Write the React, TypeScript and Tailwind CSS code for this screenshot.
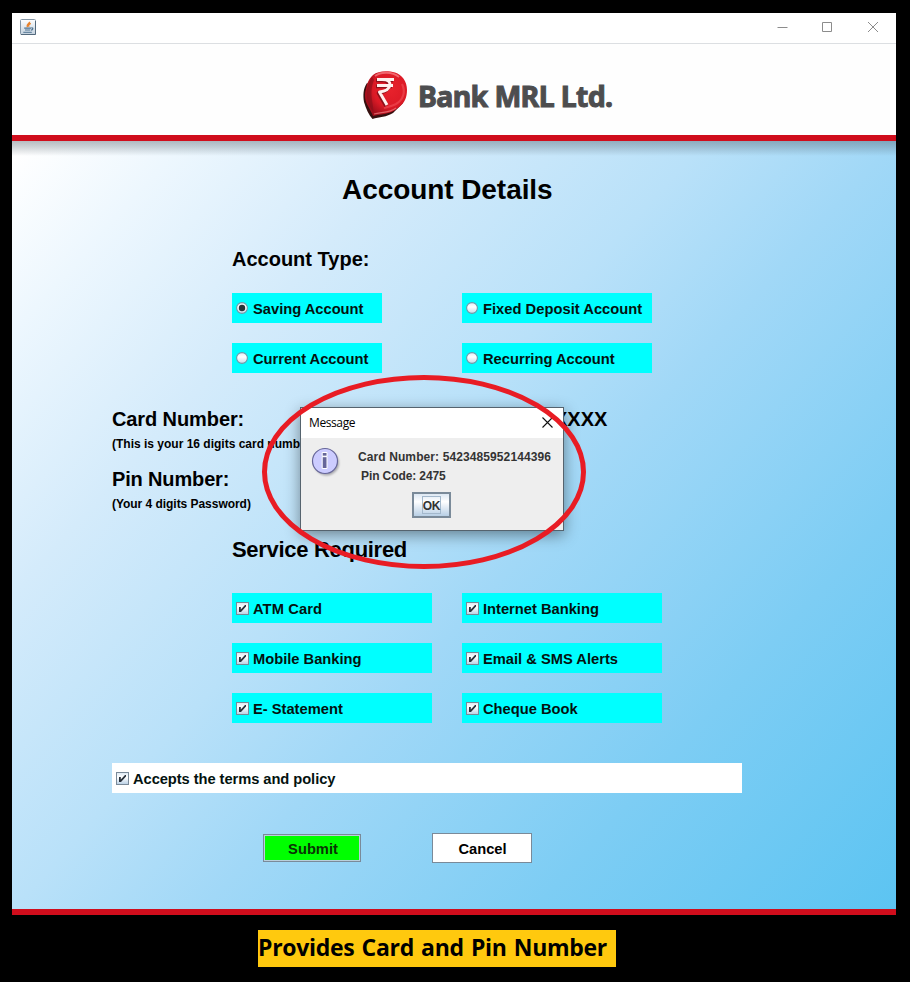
import React from "react";

function JavaIcon() {
  return (
    <svg width="16" height="16" viewBox="0 0 16 16" fill="none">
      <defs>
        <linearGradient id="jbg" x1="0" y1="0" x2="0" y2="1">
          <stop offset="0" stopColor="#ffffff" />
          <stop offset="1" stopColor="#c3d1de" />
        </linearGradient>
      </defs>
      <rect x="0.5" y="0.5" width="15" height="15" rx="1" fill="url(#jbg)" stroke="#8496a6" />
      <path d="M1 15.5H15.5V2" stroke="#53697c" />
      <path d="M9.5 2.7C10 4.6 6 5 7.3 8.3M10.8 4.3C8.3 5.4 8.3 6.3 9 7.7" stroke="#e8802a" strokeWidth="1.4" />
      <path d="M4.2 9.2H11M5 11H10.3M11.3 8.8C13.6 8.6 13 11 11 11.2" stroke="#4f7391" strokeWidth="1.2" />
      <path d="M3.3 13.3H11.8" stroke="#4f7391" />
    </svg>
  );
}

function RupeeLogo() {
  return (
    <svg width="46" height="50" viewBox="0 0 46 50" fill="none">
      <defs>
        <radialGradient id="ball" cx="0.6" cy="0.4" r="0.62">
          <stop offset="0" stopColor="#e8222c" />
          <stop offset="0.65" stopColor="#dc1a26" />
          <stop offset="1" stopColor="#a30f1c" />
        </radialGradient>
      </defs>
      <path d="M4 13C0 19 0 25 1 32C3 39 6 45 9.500 49C16 47 24 47 30 43L40 33Z" fill="#35100f" />
      <path d="M10 5C5 10 4 14 3 19C1 25 2 31 5 36C7 40 9 43 10 46C19 44 28 44 35 38C42 33 44 27 44 20C44 11 39 5 32 2.500C25 .3 15 .5 10 5Z" fill="url(#ball)" />
      <path d="M9 7C3 16 2 26 6 35C9 40 10 42 10 45C12 35 5 25 11 10Z" fill="#86101a" opacity=".6" />
      <path d="M12 6C18 1.500 29 1.500 36 7" stroke="#f78085" strokeWidth="1.800" opacity=".75" />
      <path d="M39 14C43 22 40 30 33 34C29 36 25 37 21 38" stroke="#f3555c" strokeWidth="2.200" opacity=".55" />
      <path d="M11 44C18 42 27 43 33 38" stroke="#f48085" strokeWidth="1.200" opacity=".7" />
      <g strokeLinejoin="round">
        <path d="M14 9.500H31M14 15.500H30M19 9.500C26 9.500 27 12 27 15C26 20 21 21.500 16.500 22L24 35" stroke="#8f101a" strokeWidth="3.600" transform="translate(-1 1)" />
        <path d="M14 9.500H31M14 15.500H30M19 9.500C26 9.500 27 12 27 15C26 20 21 21.500 16.500 22L24 35" stroke="#fff1ee" strokeWidth="3" />
      </g>
    </svg>
  );
}

function InfoIcon() {
  return (
    <svg width="32" height="32" viewBox="0 0 32 32">
      <defs>
        <filter id="soft" x="-20%" y="-20%" width="140%" height="140%">
          <feGaussianBlur stdDeviation="1.200" />
        </filter>
      </defs>
      <circle cx="15.500" cy="16" r="12.500" fill="#77777f" opacity=".6" filter="url(#soft)" />
      <circle cx="14" cy="14" r="12.500" fill="#ccccff" stroke="#666699" strokeWidth="1.200" />
      <path d="M11.200 5.500H16V9.200H11.200ZM11.200 9.700H16V21.500H11.200Z" fill="#666699" stroke="#fff" strokeWidth="1" />
    </svg>
  );
}

function Radio({ checked }: { checked?: boolean }) {
  return (
    <svg width="12" height="12" viewBox="0 0 12 12" className="block shrink-0">
      <defs>
        <linearGradient id="rg" x1="0" y1="0" x2="0" y2="1">
          <stop offset="0" stopColor="#e3edf6" />
          <stop offset=".4" stopColor="#ffffff" />
          <stop offset="1" stopColor="#c5dbea" />
        </linearGradient>
      </defs>
      <circle cx="6" cy="6" r="5.400" fill="url(#rg)" stroke="#7097a8" strokeWidth="1.100" />
      {checked && <circle cx="6" cy="6" r="3.200" fill="#26343a" />}
    </svg>
  );
}

function Check() {
  return (
    <svg width="13" height="13" viewBox="0 0 13 13" className="block shrink-0">
      <defs>
        <linearGradient id="cg" x1="0" y1="0" x2="0" y2="1">
          <stop offset="0" stopColor="#dce8f3" />
          <stop offset=".4" stopColor="#ffffff" />
          <stop offset="1" stopColor="#b8cfe5" />
        </linearGradient>
      </defs>
      <rect x=".5" y=".5" width="12" height="12" fill="url(#cg)" stroke="#7a8a99" />
      <path d="M3 5H4.800V7.500L9 3H10V4.500L5 10H3Z" fill="#28303a" />
    </svg>
  );
}

type OptProps = { label: string; radio?: boolean; checked?: boolean; box: string; text?: string };
function Option({ label, radio, checked, box, text = "" }: OptProps) {
  return (
    <label className={`flex h-[30px] items-center pl-1 ${box}`}>
      {radio ? <Radio checked={checked} /> : <Check />}
      <span className={`${radio ? "ml-[5px]" : "ml-1"} mt-0.5 whitespace-nowrap text-[14.7px] leading-[16px] font-bold text-[#04120f] ${text}`}>{label}</span>
    </label>
  );
}

function MessageDialog() {
  return (
    <div className="absolute left-[288px] top-[394px] flex h-[124px] w-[264px] flex-col border border-[#55636e] bg-[#eeeeee] shadow-[0_4px_14px_rgba(0,0,0,0.42)]">
      <div className="flex h-[30px] shrink-0 items-center justify-between bg-white pl-2 pr-[10px]">
        <span className="font-['Open_Sans','Noto_Sans',sans-serif] text-[12px] tracking-[-0.4px]">Message</span>
        <svg width="11" height="11" viewBox="0 0 11 11" className="mb-0.5"><path d="M.5.5L10.500 10.500M10.500.5L.5 10.500" stroke="#111" strokeWidth="1.100" /></svg>
      </div>
      <div className="flex h-[54px] shrink-0 pl-[10px] pt-[9px]">
        <InfoIcon />
        <div className="ml-[15px] mt-px whitespace-pre text-[12px] leading-[19px] font-bold text-[#333333]">
          <div className="tracking-[0.1px]">Card Number: 5423485952144396</div>
          <div className="pl-[3px] tracking-[-0.1px]">Pin Code: 2475</div>
        </div>
      </div>
      <button className="ml-[111px] flex h-[26px] w-[39px] shrink-0 items-center justify-center border-2 border-[#7a8a99] bg-linear-to-b from-[#dde8f3] via-white via-35% to-[#b8cfe5]">
        <span className="flex h-[18px] w-[19px] items-center justify-center border border-[#a3b8cc] pt-px text-[12px] font-bold tracking-[-0.3px] text-[#333333]">OK</span>
      </button>
    </div>
  );
}

export default function App() {
  return (
    <div className="flex h-[982px] w-[910px] flex-col overflow-hidden bg-black pl-3 pt-[13px] font-['Liberation_Sans',Arial,sans-serif] text-black">
      <main className="relative flex h-[902px] w-[884px] shrink-0 flex-col bg-white">
        <div className="flex h-[31px] shrink-0 items-center justify-between border-b border-[#dcdfe2] pl-2 pr-[17px]">
          <div className="pb-0.5"><JavaIcon /></div>
          <svg width="102" height="12" viewBox="0 0 102 12" fill="none" stroke="#8c8c8c" className="mb-0.5">
            <path d="M.5 6.500H10.500M45.500 1.500H54.500V10.500H45.500ZM91 1L101 11M101 1L91 11" />
          </svg>
        </div>
        <header className="flex h-[91px] shrink-0 bg-[#fefefe] pl-[351px] pt-[26px]">
          <RupeeLogo />
          <h2 className="ml-[9px] mt-[4px] whitespace-nowrap font-['Noto_Sans',sans-serif] text-[28.5px] leading-[44px] font-bold tracking-[-0.65px] text-[#4d4d4f] [-webkit-text-stroke:1px_#4d4d4f] [paint-order:stroke] [stroke-linejoin:round]">Bank MRL Ltd.</h2>
        </header>
        <div className="h-1.5 shrink-0 bg-[#d00d1c]" />
        <section className="h-[768px] shrink-0 bg-[linear-gradient(132deg,#ffffff_1%,#edf7fe_11%,#d4ebfb_26%,#b9e1f9_44%,#a1d8f7_56%,#7dcdf4_77%,#5cc4f2_100%)]">
          <div className="h-full bg-[linear-gradient(to_bottom,rgba(75,90,100,0.4)_0px,rgba(75,90,100,0.26)_6px,transparent_15px)] pl-[100px] pt-[31px]">
            <h1 className="pl-[230px] text-[28px] leading-[36px] font-bold tracking-[-0.07px]">Account Details</h1>
            <h3 className="mt-[35px] pl-[120px] text-[20px] leading-[32px] font-bold">Account Type:</h3>
            <div className="mt-[18px] grid grid-cols-[230px_200px] gap-y-5 pl-[120px]">
              <Option radio checked label="Saving Account" box="w-[150px] bg-[#00ffff]" />
              <Option radio label="Fixed Deposit Account" box="w-[190px] bg-[#00ffff]" text="tracking-[0.03px]" />
              <Option radio label="Current Account" box="w-[150px] bg-[#00ffff]" />
              <Option radio label="Recurring Account" box="w-[190px] bg-[#00ffff]" />
            </div>
            <div className="mt-[30px] flex text-[20px] leading-[32px] font-bold">
              <span className="w-[442px] tracking-[-0.1px]">Card Number:</span>
              <span>XXXX</span>
            </div>
            <p className="text-[12px] leading-[18px] font-bold">(This is your 16 digits card number)</p>
            <h3 className="mt-[10px] text-[20px] leading-[32px] font-bold tracking-[-0.15px]">Pin Number:</h3>
            <p className="text-[12px] leading-[18px] font-bold tracking-[-0.04px]">(Your 4 digits Password)</p>
            <h3 className="mt-[20px] pl-[120px] text-[22px] leading-[34px] font-bold tracking-[-0.3px]">Service Required</h3>
            <div className="mt-[26px] grid grid-cols-[200px_200px] gap-x-[30px] gap-y-5 pl-[120px]">
              <Option label="ATM Card" box="bg-[#00ffff]" text="tracking-[0.1px]" />
              <Option label="Internet Banking" box="bg-[#00ffff]" />
              <Option label="Mobile Banking" box="bg-[#00ffff]" />
              <Option label="Email & SMS Alerts" box="bg-[#00ffff]" />
              <Option label="E- Statement" box="bg-[#00ffff]" />
              <Option label="Cheque Book" box="bg-[#00ffff]" />
            </div>
            <Option label="Accepts the terms and policy" box="mt-[40px] w-[630px] bg-white" text="tracking-[-0.06px]" />
            <div className="mt-[40px] flex items-center pl-[151px]">
              <button className="h-[28px] w-[98px] border border-[#7a8a99] bg-[#00ff00] pl-0.5 pt-0.5 text-[14.7px] leading-none font-bold text-[#0b3305] shadow-[inset_0_0_0_1px_#b9cfdc]">Submit</button>
              <button className="ml-[71px] h-[30px] w-[100px] border border-[#7a8a99] bg-white pl-px pt-0.5 text-[14.7px] leading-none font-bold">Cancel</button>
            </div>
          </div>
        </section>
        <div className="h-1.5 shrink-0 bg-[#d00d1c]" />
        <MessageDialog />
        <svg className="pointer-events-none absolute left-[248px] top-[360px]" width="330" height="200" viewBox="0 0 330 200" fill="none">
          <ellipse cx="164" cy="99" rx="159.500" ry="94.500" stroke="#e81c24" strokeWidth="5" />
        </svg>
      </main>
      <div className="ml-[246px] mt-[15px] flex h-[37px] w-[358px] shrink-0 items-center whitespace-nowrap bg-[#ffc90e] pb-0.5 font-['Open_Sans','Noto_Sans',sans-serif] text-[23px] font-bold tracking-[-0.3px] [word-spacing:1.5px]">
        Provides Card and Pin Number
      </div>
    </div>
  );
}
